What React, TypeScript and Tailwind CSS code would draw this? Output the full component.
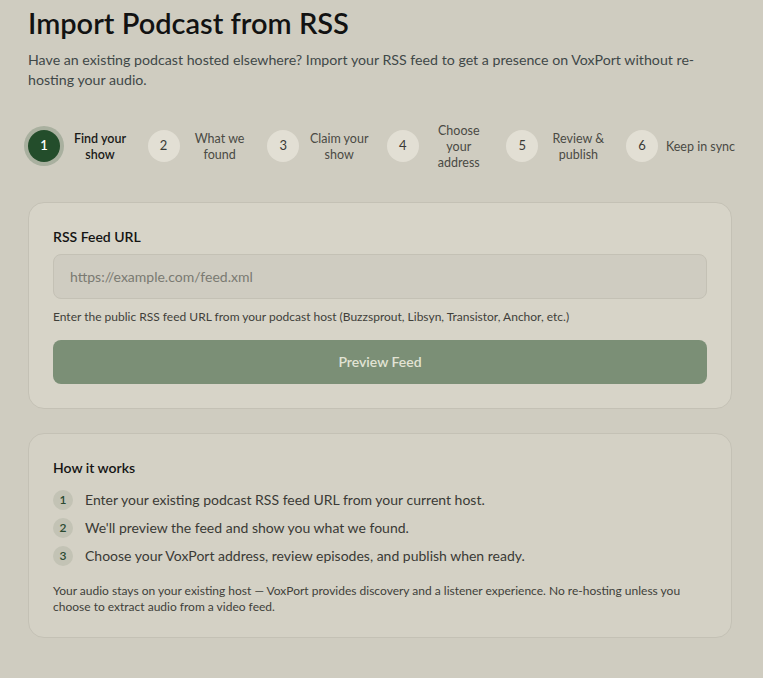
const steps = [
  { n: 1, lines: ["Find your", "show"] },
  { n: 2, lines: ["What we", "found"] },
  { n: 3, lines: ["Claim your", "show"] },
  { n: 4, lines: ["Choose", "your", "address"] },
  { n: 5, lines: ["Review &", "publish"] },
  { n: 6, lines: ["Keep in sync"] },
];

const howItWorks = [
  "Enter your existing podcast RSS feed URL from your current host.",
  "We'll preview the feed and show you what we found.",
  "Choose your VoxPort address, review episodes, and publish when ready.",
];

function Stepper() {
  return (
    <ol className="flex items-center justify-between">
      {steps.map((s) => {
        const active = s.n === 1;
        return (
          <li key={s.n} className="flex items-center gap-2">
            <span
              className={
                active
                  ? "flex h-8 w-8 items-center justify-center rounded-full bg-[#234d2b] text-[13px] font-semibold text-white ring-4 ring-[#a9b09f]"
                  : "flex h-8 w-8 items-center justify-center rounded-full bg-[#e2dfd4] text-[13px] text-[#3a3a36]"
              }
            >
              {s.n}
            </span>
            <span
              className={
                (s.n === 6 ? "w-[66px] whitespace-nowrap " : "w-16 ") +
                (active
                  ? "pt-[2px] text-center text-[12.5px] leading-4 font-semibold text-[#1a1a18]"
                  : "pt-[2px] text-center text-[12.5px] leading-4 text-[#4a4a44]")
              }
            >
              {s.lines.map((l) => (
                <span key={l} className="block">
                  {l}
                </span>
              ))}
            </span>
          </li>
        );
      })}
    </ol>
  );
}

export default function App() {
  return (
    <div className="min-h-screen bg-[#cfccc0] font-['Lato',sans-serif]">
      <div className="pl-7 pr-[31px] pt-[5px] pb-10">
        <h1 className="text-[29px] leading-9 font-semibold text-[#121212]">Import Podcast from RSS</h1>
        <p className="mt-[9px] text-[14.2px] leading-5 text-[#3f4848]">
          Have an existing podcast hosted elsewhere? Import your RSS feed to get a presence on VoxPort without re-hosting
          your audio.
        </p>

        <div className="mt-[31px]">
          <Stepper />
        </div>

        <form
          onSubmit={(e) => e.preventDefault()}
          className="mt-[31px] rounded-2xl border border-[#c4c1b5] bg-[#d7d4c8] p-6"
        >
          <label className="block">
            <span className="block text-sm leading-5 font-semibold text-[#141414]">RSS Feed URL</span>
            <input
              name="feed"
              placeholder="https://example.com/feed.xml"
              className="mt-[7px] block w-full rounded-lg border border-[#c4c1b5] bg-[#cfccc1] px-4 py-3 text-[14px] leading-[19px] text-[#222] placeholder:text-[#7a7a72] outline-none"
            />
          </label>
          <p className="mt-[9px] text-xs leading-[18px] text-[#3f3f3a]">
            Enter the public RSS feed URL from your podcast host (Buzzsprout, Libsyn, Transistor, Anchor, etc.)
          </p>
          <button
            type="submit"
            disabled
            className="mt-[14px] h-11 w-full rounded-lg bg-[#7b8f76] text-sm font-semibold text-[#e2e3d4]"
          >
            Preview Feed
          </button>
        </form>

        <div className="mt-6 rounded-2xl border border-[#c4c1b5] bg-[#d4d1c5] px-6 pt-6 pb-[22px]">
          <h2 className="text-sm leading-5 font-semibold text-[#141414]">How it works</h2>
          <ol className="mt-[11px] space-y-[6px]">
            {howItWorks.map((t, i) => (
              <li key={i} className="flex items-center gap-3">
                <span className="flex h-5 w-5 shrink-0 items-center justify-center rounded-full bg-[#c3c3b5] text-xs font-semibold text-[#2b4a31]">
                  {i + 1}
                </span>
                <span className="text-[14px] leading-[22px] text-[#3a3a35]">{t}</span>
              </li>
            ))}
          </ol>
          <p className="mt-4 text-xs leading-4 text-[#3f3f3a]">
            Your audio stays on your existing host — VoxPort provides discovery and a listener experience. No re-hosting
            unless you choose to extract audio from a video feed.
          </p>
        </div>
      </div>
    </div>
  );
}
